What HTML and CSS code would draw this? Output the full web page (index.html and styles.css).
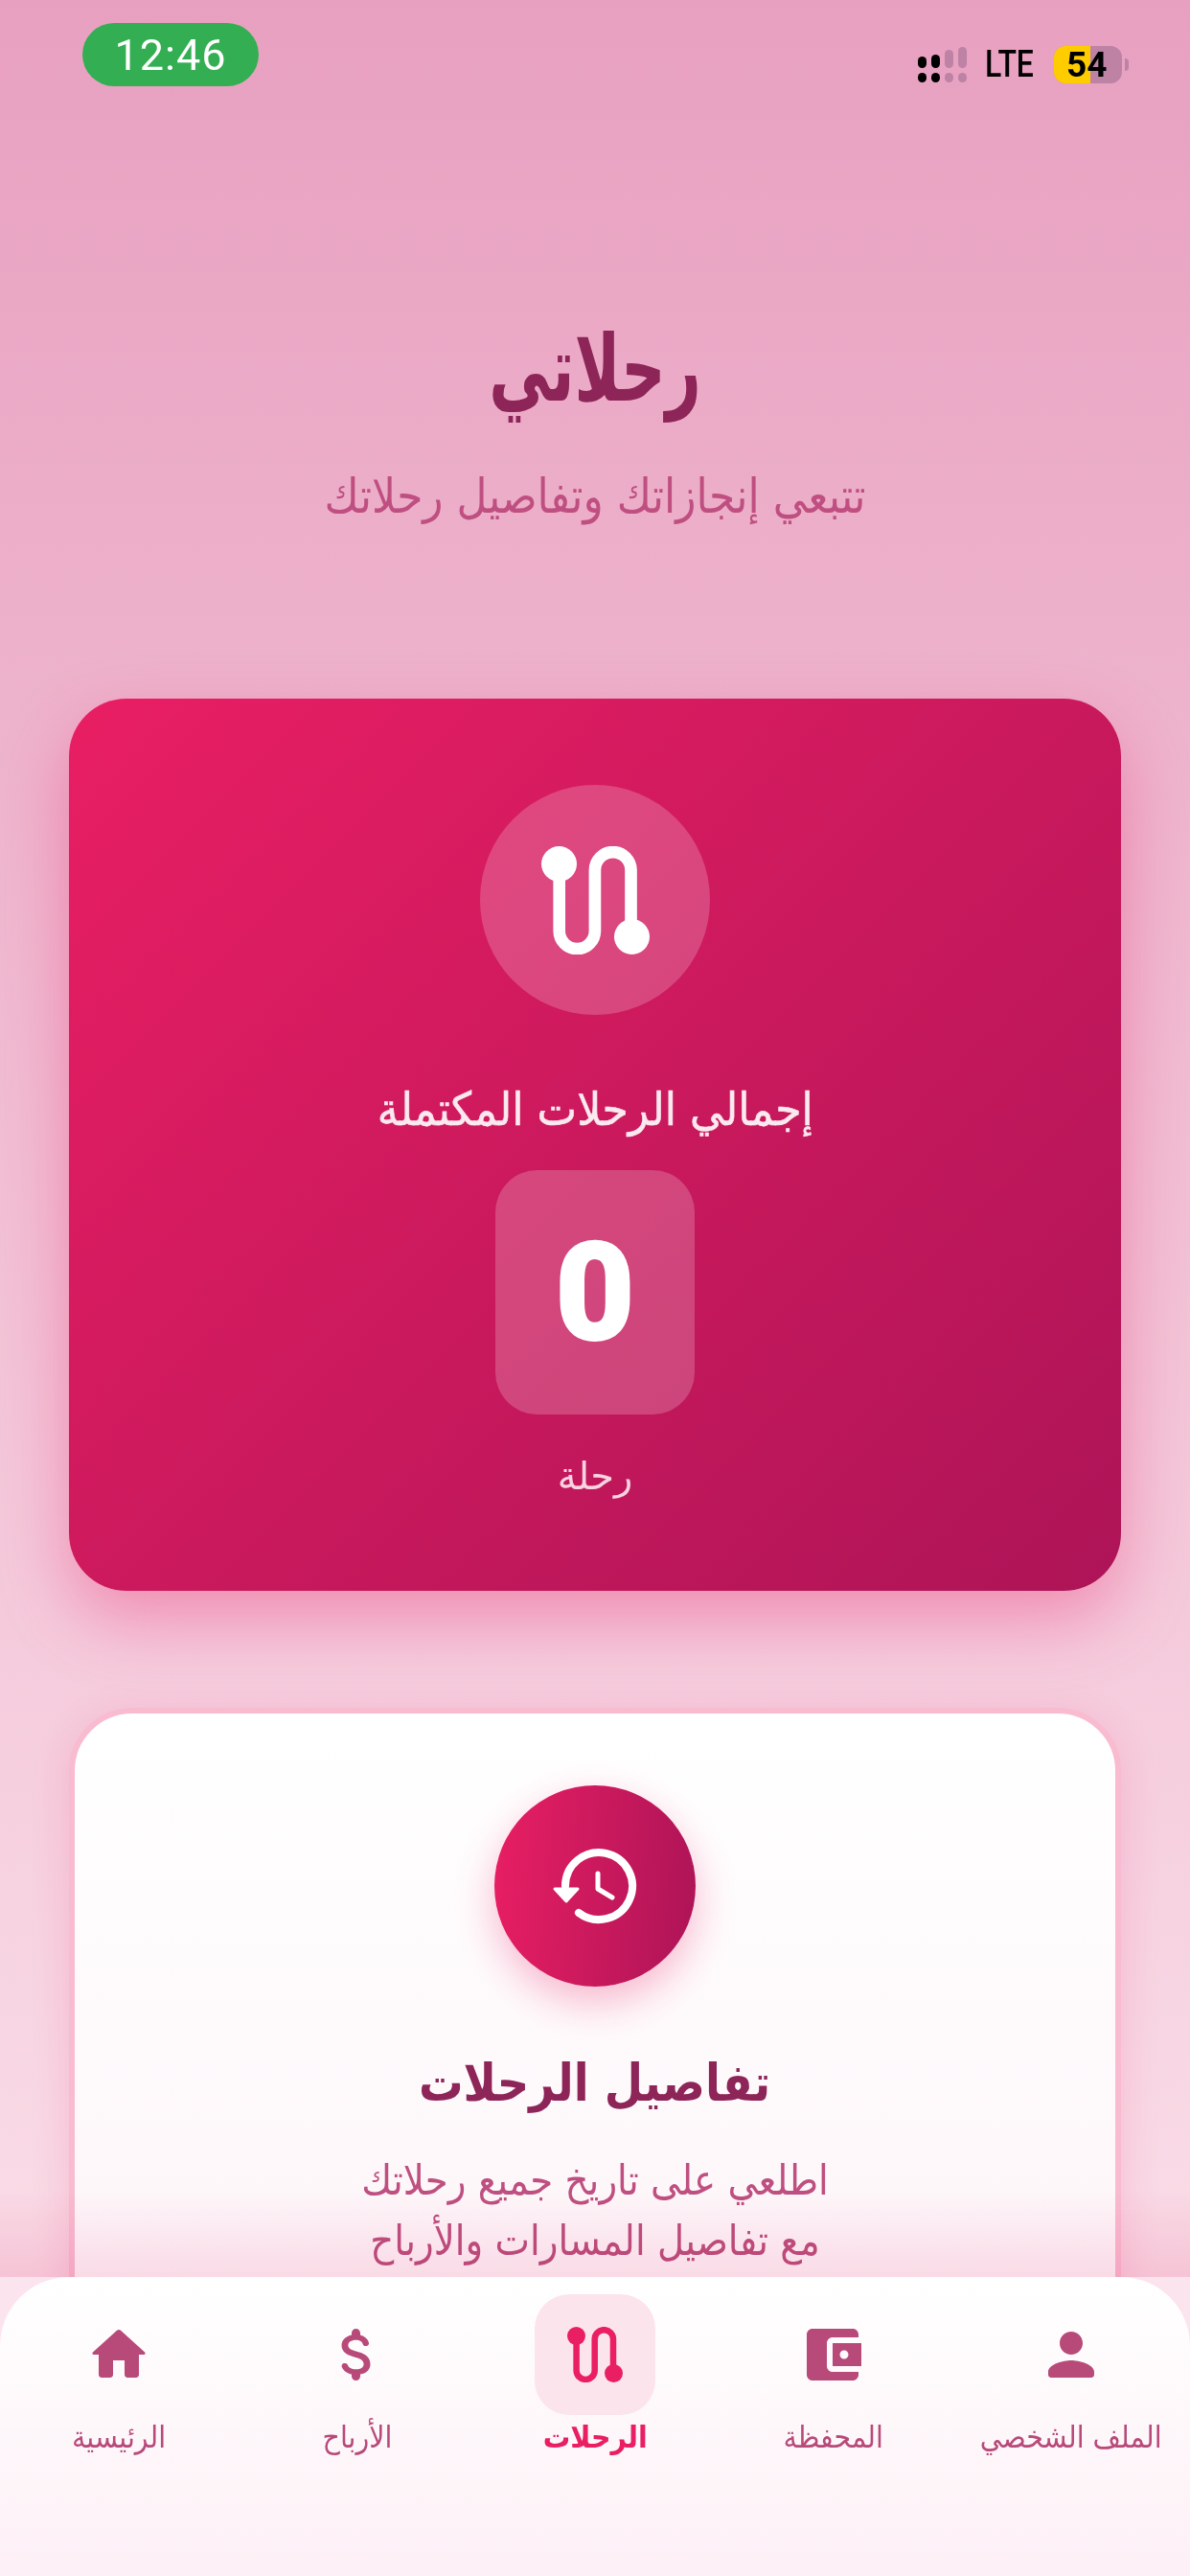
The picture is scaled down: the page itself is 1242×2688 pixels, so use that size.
FILE: index.html
```html
<!DOCTYPE html>
<html lang="ar">
  <head>
    <meta charset="UTF-8" />
    <meta name="viewport" content="width=device-width, initial-scale=1.0" />
    <title>رحلاتي</title>
    <link rel="stylesheet" href="styles.css">
  </head>
  <body>
    <main class="content">
      <!-- status bar -->
      <div class="statusBar">
        <span class="timePill">12:46</span>
        <div class="statusRight">
          <svg class="signal" width="52" height="38" viewBox="0 0 52 38">
            <rect x="0" y="10" width="9" height="12" rx="4.5" fill="#000" />
            <rect x="0" y="27" width="9" height="10" rx="4.5" fill="#000" />
            <rect x="14" y="8" width="9" height="14" rx="4.5" fill="#000" />
            <rect x="14" y="27" width="9" height="10" rx="4.5" fill="#000" />
            <rect x="28" y="3" width="9" height="19" rx="4.5" fill="#bd82a4" />
            <rect x="28" y="27" width="9" height="10" rx="4.5" fill="#bd82a4" />
            <rect x="42" y="0" width="9" height="22" rx="4.5" fill="#bd82a4" />
            <rect x="42" y="27" width="9" height="10" rx="4.5" fill="#bd82a4" />
          </svg>
          <span class="lte">LTE</span>
          <div class="battery">
            <div class="batteryLevel" style="width: 54%"></div>
            <span class="batteryText">54</span>
          </div>
        </div>
      </div>

      <div class="pageHead">
        <h1>رحلاتي</h1>
        <p>تتبعي إنجازاتك وتفاصيل رحلاتك</p>
      </div>

      <section class="totalCard">
        <div class="totalIcon">
          <svg class="routeBig" viewBox="0 0 58 58">
            <path d="M9.6 9.5V45.4a9.55 9.55 0 0 0 19.1 0V12.8a9.65 9.65 0 0 1 19.3 0V48.5" fill="none" stroke="#fff" stroke-width="6.5" />
            <circle cx="9.5" cy="9.5" r="9.5" fill="#fff" />
            <circle cx="48.5" cy="48.5" r="9.5" fill="#fff" />
          </svg>
        </div>
        <h2>إجمالي الرحلات المكتملة</h2>
        <div class="totalNumber">0</div>
        <span class="totalUnit">رحلة</span>
      </section>

      <section class="detailsCard">
        <div class="detailsIcon">
          <svg width="96" height="96" viewBox="73 70 96 96">
            <path d="M90 118A35 35 0 1 1 104 146" fill="none" stroke="#fff" stroke-width="8" stroke-linecap="round" />
            <path d="M79 121H103L91 134Z" fill="#fff" stroke="#fff" stroke-width="3" stroke-linejoin="round" />
            <path d="M124 105V121L139 130" fill="none" stroke="#fff" stroke-width="5" stroke-linecap="round" stroke-linejoin="round" />
          </svg>
        </div>
        <h3>تفاصيل الرحلات</h3>
        <p>اطلعي على تاريخ جميع رحلاتك<br />مع تفاصيل المسارات والأرباح</p>
      </section>

      <div class="contentFade"></div>
    </main>

    <div class="navWrap">
      <nav class="bottomNav">
        <a class="navItem">
          <span class="navIcon">
            <svg viewBox="0 0 24 24"><path d="M10 19v-5h4v5c0 .55.45 1 1 1h3c.55 0 1-.45 1-1v-7h1.7c.46 0 .68-.57.33-.87L12.67 3.6c-.38-.34-.96-.34-1.34 0l-8.36 7.53c-.34.3-.13.87.33.87H5v7c0 .55.45 1 1 1h3c.55 0 1-.45 1-1z" /></svg>
          </span>
          <span class="navLabel">الرئيسية</span>
        </a>
        <a class="navItem">
          <span class="navIcon">
            <svg viewBox="0 0 24 24"><path d="M11.8 10.9c-2.27-.59-3-1.2-3-2.15 0-1.09 1.01-1.85 2.7-1.85 1.42 0 2.13.54 2.39 1.4.12.4.45.7.87.7h.3c.66 0 1.13-.65.9-1.27-.42-1.18-1.4-2.16-2.96-2.54V4.5c0-.83-.67-1.5-1.5-1.5S10 3.67 10 4.5v.66c-1.94.42-3.5 1.68-3.5 3.61 0 2.31 1.91 3.46 4.7 4.13 2.5.6 3 1.48 3 2.41 0 .69-.49 1.79-2.7 1.79-1.65 0-2.5-.59-2.83-1.43-.15-.39-.49-.67-.9-.67h-.28c-.67 0-1.14.68-.89 1.3.57 1.39 1.9 2.21 3.4 2.53v.67c0 .83.67 1.5 1.5 1.5s1.5-.67 1.5-1.5v-.65c1.95-.37 3.5-1.5 3.5-3.55 0-2.84-2.43-3.81-4.7-4.4z" /></svg>
          </span>
          <span class="navLabel">الأرباح</span>
        </a>
        <a class="navItem active">
          <span class="navIcon">
            <svg class="routeSmall" viewBox="0 0 58 58">
              <path d="M9.6 9.5V45.4a9.55 9.55 0 0 0 19.1 0V12.8a9.65 9.65 0 0 1 19.3 0V48.5" fill="none" stroke="#e91e63" stroke-width="6.5" />
              <circle cx="9.5" cy="9.5" r="9.5" />
              <circle cx="48.5" cy="48.5" r="9.5" />
            </svg>
          </span>
          <span class="navLabel">الرحلات</span>
        </a>
        <a class="navItem">
          <span class="navIcon">
            <svg viewBox="0 0 24 24"><path d="M21 18v1c0 1.1-.9 2-2 2H5c-1.11 0-2-.9-2-2V5c0-1.1.89-2 2-2h14c1.1 0 2 .9 2 2v1h-9c-1.11 0-2 .9-2 2v8c0 1.1.89 2 2 2h9zm-9-2h10V8H12v8zm4-2.5c-.83 0-1.5-.67-1.5-1.5s.67-1.5 1.5-1.5 1.5.67 1.5 1.5-.67 1.5-1.5 1.5z" /></svg>
          </span>
          <span class="navLabel">المحفظة</span>
        </a>
        <a class="navItem">
          <span class="navIcon">
            <svg viewBox="0 0 24 24"><path d="M12 12c2.21 0 4-1.79 4-4s-1.79-4-4-4-4 1.79-4 4 1.79 4 4 4zm0 2c-2.67 0-8 1.34-8 4v1c0 .55.45 1 1 1h14c.55 0 1-.45 1-1v-1c0-2.66-5.33-4-8-4z" /></svg>
          </span>
          <span class="navLabel">الملف الشخصي</span>
        </a>
      </nav>
    </div>
  </body>
</html>
```

FILE: styles.css
```css
html,
body {
  height: 100%;
}
body {
  height: 100vh;
  margin: 0;
  display: flex;
  flex-direction: column;
  overflow: hidden;
  background: linear-gradient(180deg, #e8a0c0 0%, #fce4ec 100%);
  font-family: "DejaVu Sans", sans-serif;
}

/* status bar */
.content {
  position: relative;
  height: 2376px;
  flex: none;
  overflow: hidden;
}
.statusBar {
  display: flex;
  justify-content: space-between;
  align-items: flex-start;
  padding: 24px 71px 0 86px;
}
.timePill {
  width: 184px;
  height: 66px;
  display: flex;
  align-items: center;
  justify-content: center;
  background-color: #34ae52;
  border-radius: 33px;
  color: #fff;
  font-family: "Roboto", sans-serif;
  font-size: 45px;
  letter-spacing: 1px;
}
.statusRight {
  display: flex;
  align-items: center;
  margin-top: 24px;
}
.signal {
  margin-right: 18px;
}
.lte {
  display: inline-block;
  width: 54px;
  color: #000;
  font-family: "Roboto", sans-serif;
  font-weight: 500;
  font-size: 39px;
  line-height: 39px;
  transform: scaleX(0.82);
  transform-origin: left center;
  margin-right: 18px;
}
.battery {
  position: relative;
  width: 71px;
  height: 39px;
  border-radius: 12px;
  background-color: #bd82a4;
}
.batteryLevel {
  height: 100%;
  background-color: #ffcc00;
  border-radius: 12px 0 0 12px;
}
.batteryText {
  position: absolute;
  left: 13px;
  top: 0;
  color: #000;
  font-family: "Roboto", sans-serif;
  font-weight: 700;
  font-size: 37px;
  line-height: 39px;
}
.battery::after {
  content: "";
  position: absolute;
  right: -7px;
  top: 13px;
  width: 4px;
  height: 13px;
  background-color: #bd82a4;
  border-radius: 0 6px 6px 0;
}

/* header */
.pageHead {
  text-align: center;
  margin-top: 240px;
}
h1 {
  margin: 0;
  color: #8e2558;
  font-size: 96px;
  line-height: 110px;
  font-weight: 700;
  transform: scaleX(0.67);
}
.pageHead p {
  margin: 50px 0 0;
  color: #bf4f80;
  font-size: 50px;
  line-height: 56px;
  transform: scaleX(0.88);
}

/* total card */
.totalCard {
  margin: 183px 72px 0;
  height: 931px;
  box-sizing: border-box;
  padding-top: 90px;
  display: flex;
  flex-direction: column;
  align-items: center;
  border-radius: 60px;
  background: linear-gradient(135deg, #e91e63 0%, #ad1457 100%);
  box-shadow: 0 30px 70px rgba(233, 30, 99, 0.35);
}
.totalIcon {
  width: 240px;
  height: 240px;
  display: flex;
  align-items: center;
  justify-content: center;
  border-radius: 50%;
  background-color: rgba(255, 255, 255, 0.2);
}
.routeBig {
  width: 113px;
  height: 113px;
}
.totalCard h2 {
  margin: 63px 0 0;
  color: #fbe9f0;
  font-size: 48px;
  line-height: 70px;
  font-weight: 400;
  -webkit-text-stroke: 0.6px #fbe9f0;
  transform: scaleX(0.92);
}
.totalNumber {
  margin-top: 29px;
  width: 208px;
  height: 255px;
  display: flex;
  align-items: center;
  justify-content: center;
  border-radius: 44px;
  background-color: rgba(255, 255, 255, 0.2);
  color: #fff;
  font-family: "Roboto", sans-serif;
  font-size: 143px;
  font-weight: 900;
  -webkit-text-stroke: 2px #fff;
}
.totalUnit {
  margin-top: 36px;
  color: #f8d3e1;
  font-size: 40px;
  line-height: 56px;
}

/* details card */
.detailsCard {
  margin: 122px 72px 0;
  height: 700px;
  box-sizing: border-box;
  padding-top: 75px;
  display: flex;
  flex-direction: column;
  align-items: center;
  border: 6px solid #f8bbd0;
  border-radius: 66px;
  background: linear-gradient(180deg, #fff 0%, #fdf4f8 100%);
  box-shadow: 0 10px 40px rgba(233, 30, 99, 0.15);
}
.detailsIcon {
  width: 210px;
  height: 210px;
  display: flex;
  align-items: center;
  justify-content: center;
  border-radius: 50%;
  background: linear-gradient(95deg, #e91e63 0%, #ad1457 100%);
  box-shadow: 0 16px 40px rgba(233, 30, 99, 0.3);
}
.detailsCard h3 {
  margin: 66px 0 0;
  color: #8e2558;
  font-size: 54px;
  line-height: 70px;
  font-weight: 700;
  transform: scaleX(0.86);
}
.detailsCard p {
  margin: 34px 0 0;
  text-align: center;
  color: #bf4f80;
  font-size: 44px;
  line-height: 63px;
  transform: scaleX(0.88);
}
.contentFade {
  position: absolute;
  left: 0;
  right: 0;
  bottom: 0;
  height: 90px;
  background: linear-gradient(180deg, #fff 0%, #fbe3ec 100%);
  mix-blend-mode: multiply;
}

/* bottom nav */
.navWrap {
  flex: 1;
  background-color: #fce4ef;
}
.bottomNav {
  height: 100%;
  box-sizing: border-box;
  padding-top: 18px;
  display: grid;
  grid-template-columns: repeat(5, 1fr);
  align-items: start;
  border-radius: 72px 72px 0 0;
  background: linear-gradient(180deg, #fff 0%, #fdf0f6 100%);
}
.navItem {
  display: flex;
  flex-direction: column;
  align-items: center;
  color: #b84a7a;
}
.navIcon {
  width: 126px;
  height: 126px;
  display: flex;
  align-items: center;
  justify-content: center;
  border-radius: 36px;
}
.navIcon svg {
  width: 72px;
  height: 72px;
  fill: #b84a7a;
}
.navIcon .routeSmall {
  width: 58px;
  height: 58px;
  fill: #e91e63;
}
.navLabel {
  margin-top: 1px;
  font-size: 32px;
  line-height: 44px;
  white-space: nowrap;
  transform: scaleX(0.89);
}
.active .navIcon {
  background-color: #fce4ec;
}
.active .navLabel {
  color: #e91e63;
  font-weight: 700;
}
```
